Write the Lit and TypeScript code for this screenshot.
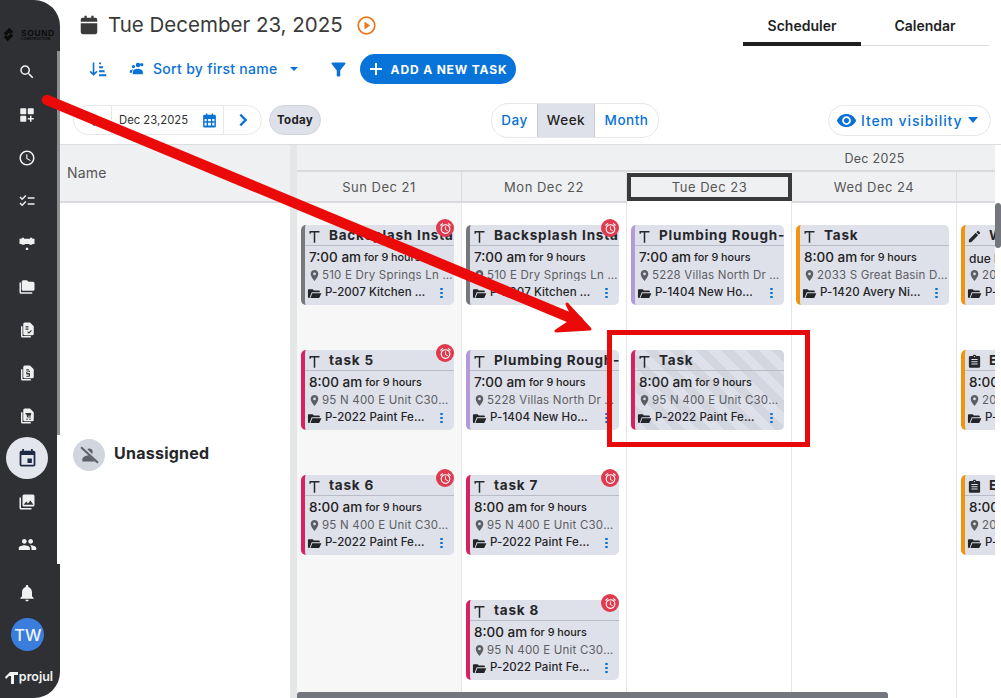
import { LitElement, css, html, nothing, svg } from 'lit';
import { customElement } from 'lit/decorators.js';

type Task = {
  title: string;
  icon?: 'hammer' | 'pencil' | 'clipboard';
  color: string;
  time?: string;
  due?: string;
  address: string;
  project: string;
  alarm?: boolean;
  striped?: boolean;
};

const GREY = '#77787c';
const PINK = '#d8215f';
const PURPLE = '#b49ad8';
const ORANGE = '#f2930f';

const paint = (title: string, extra: Partial<Task> = {}): Task => ({
  title,
  color: PINK,
  time: '8:00 am',
  address: '95 N 400 E Unit C303 Lehi',
  project: 'P-2022 Paint Fence Job',
  alarm: true,
  ...extra,
});

const backsplash: Task = {
  title: 'Backsplash Install',
  color: GREY,
  time: '7:00 am',
  address: '510 E Dry Springs Ln Saratoga',
  project: 'P-2007 Kitchen Remodel',
  alarm: true,
};

const plumbing: Task = {
  title: 'Plumbing Rough-In',
  color: PURPLE,
  time: '7:00 am',
  address: '5228 Villas North Dr Lehi',
  project: 'P-1404 New Home Build',
};

const days: { label: string; weekend?: boolean; today?: boolean; tasks: Task[] }[] = [
  { label: 'Sun Dec 21', weekend: true, tasks: [backsplash, paint('task 5'), paint('task 6')] },
  {
    label: 'Mon Dec 22',
    tasks: [backsplash, { ...plumbing, alarm: false }, paint('task 7'), paint('task 8')],
  },
  {
    label: 'Tue Dec 23',
    today: true,
    tasks: [plumbing, paint('Task', { alarm: false, striped: true })],
  },
  {
    label: 'Wed Dec 24',
    tasks: [
      {
        title: 'Task',
        color: ORANGE,
        time: '8:00 am',
        address: '2033 S Great Basin Drive',
        project: 'P-1420 Avery Nichols',
      },
    ],
  },
  {
    label: 'Thu Dec 25',
    tasks: [
      {
        title: 'Walkthrough',
        icon: 'pencil',
        color: ORANGE,
        due: 'due by',
        address: '2033 S Great Basin Drive',
        project: 'P-1420 Avery Nichols',
      },
      {
        title: 'Estimate',
        icon: 'clipboard',
        color: ORANGE,
        time: '8:00 am',
        address: '2033 S Great Basin Drive',
        project: 'P-1420 Avery Nichols',
      },
      {
        title: 'Estimate',
        icon: 'clipboard',
        color: ORANGE,
        time: '8:00 am',
        address: '2033 S Great Basin Drive',
        project: 'P-1420 Avery Nichols',
      },
    ],
  },
];

const md = (d: string, size = 24, fill = 'currentColor') =>
  html`<svg width=${size} height=${size} viewBox="0 0 24 24" fill=${fill}>${svg`<path d=${d}></path>`}</svg>`;

const I = {
  search:
    'M15.5 14h-.79l-.28-.27A6.47 6.47 0 0 0 16 9.5 6.5 6.5 0 1 0 9.5 16c1.61 0 3.09-.59 4.23-1.57l.27.28v.79l5 4.99L20.49 19l-4.99-5zm-6 0C7.01 14 5 11.99 5 9.5S7.01 5 9.5 5 14 7.01 14 9.5 11.99 14 9.5 14z',
  dash:
    'M4 3h6a1 1 0 0 1 1 1v6a1 1 0 0 1-1 1H4a1 1 0 0 1-1-1V4a1 1 0 0 1 1-1zm10 0h6a1 1 0 0 1 1 1v6a1 1 0 0 1-1 1h-6a1 1 0 0 1-1-1V4a1 1 0 0 1 1-1zM4 13h6a1 1 0 0 1 1 1v6a1 1 0 0 1-1 1H4a1 1 0 0 1-1-1v-6a1 1 0 0 1 1-1zm12 0h2v3h3v2h-3v3h-2v-3h-3v-2h3z',
  clock:
    'M11.99 2C6.47 2 2 6.48 2 12s4.47 10 9.99 10C17.52 22 22 17.52 22 12S17.52 2 11.99 2zM12 20c-4.42 0-8-3.58-8-8s3.58-8 8-8 8 3.58 8 8-3.58 8-8 8zm.5-13H11v6l5.25 3.15.75-1.23-4.5-2.67z',
  checks:
    'M22 7h-9v2h9V7zm0 8h-9v2h9v-2zM5.54 11 2 7.46l1.41-1.41 2.12 2.12 4.24-4.24 1.41 1.41L5.54 11zm0 8L2 15.46l1.41-1.41 2.12 2.12 4.24-4.24 1.41 1.41L5.54 19z',
  sign:
    'M2 5h3V3.500h3V5h8V3.500h3V5h3v7h-3v1h-4v-1h-6v1H5v-1H2zM10.500 17h3v3h-3z',
  folders:
    'M2 6h2v13h15v2H4a2 2 0 0 1-2-2zm5-3h5l2 2h6a2 2 0 0 1 2 2v8a2 2 0 0 1-2 2H7a2 2 0 0 1-2-2V5a2 2 0 0 1 2-2z',
  docCheck:
    'M4 7h2v13h11v2H6a2 2 0 0 1-2-2zm5-5h7l5 5v10a2 2 0 0 1-2 2H9a2 2 0 0 1-2-2V4a2 2 0 0 1 2-2zm1 5v1.500h4V7zm0 3v1.500h4V10zm2.200 4.600 2.300 2.300 4-4-1-1-3 3-1.300-1.300z',
  docDollar:
    'M4 7h2v13h11v2H6a2 2 0 0 1-2-2zm5-5h7l5 5v10a2 2 0 0 1-2 2H9a2 2 0 0 1-2-2V4a2 2 0 0 1 2-2zm2 5v1.500h3.500V10H12a1 1 0 0 0-1 1v2a1 1 0 0 0 1 1h2.500v1.500H11V17h4a1 1 0 0 0 1-1v-3a1 1 0 0 0-1-1h-2.500v-1.500H16V9h-1.500V7z',
  docCart:
    'M4 7h2v13h11v2H6a2 2 0 0 1-2-2zm5-5h7l5 5v10a2 2 0 0 1-2 2H9a2 2 0 0 1-2-2V4a2 2 0 0 1 2-2zm1 6v1.500h1.200l1 4.500h5v-1.400h-3.900l-.2-1H17l.6-3.600zm2 7.200a1 1 0 1 0 0 2 1 1 0 0 0 0-2zm4 0a1 1 0 1 0 0 2 1 1 0 0 0 0-2z',
  calendarEvent:
    'M17 12h-5v5h5v-5zM16 1v2H8V1H6v2H5c-1.110 0-1.990.9-1.990 2L3 19a2 2 0 0 0 2 2h14c1.100 0 2-.9 2-2V5c0-1.100-.9-2-2-2h-1V1h-2zm3 18H5V8h14v11z',
  photos:
    'M2 6h2v14h14v2H4a2 2 0 0 1-2-2zm6-4h12a2 2 0 0 1 2 2v12a2 2 0 0 1-2 2H8a2 2 0 0 1-2-2V4a2 2 0 0 1 2-2zm-.5 13.500h13l-4-5.500-3.200 4-2.300-2.800z',
  people:
    'M16 11c1.660 0 2.990-1.340 2.990-3S17.660 5 16 5c-1.660 0-3 1.340-3 3s1.340 3 3 3zm-8 0c1.660 0 2.990-1.340 2.990-3S9.660 5 8 5C6.340 5 5 6.340 5 8s1.340 3 3 3zm0 2c-2.330 0-7 1.170-7 3.500V19h14v-2.500c0-2.330-4.670-3.500-7-3.500zm8 0c-.29 0-.62.02-.97.05 1.160.84 1.970 1.970 1.970 3.450V19h6v-2.500c0-2.330-4.670-3.500-7-3.500z',
  bell:
    'M12 22c1.100 0 2-.9 2-2h-4c0 1.100.89 2 2 2zm6-6v-5c0-3.070-1.640-5.640-4.500-6.320V4c0-.83-.67-1.500-1.500-1.500s-1.500.67-1.500 1.500v.68C7.630 5.360 6 7.920 6 11v5l-2 2v1h16v-1l-2-2z',
  calendarSolid:
    'M7 2h2.500v2h5V2H17v2h2a2 2 0 0 1 2 2v2.500H3V6a2 2 0 0 1 2-2h2zM3 10h18v10a2 2 0 0 1-2 2H5a2 2 0 0 1-2-2z',
  calendarGrid:
    'M7 2h2v2h6V2h2v2h2a2 2 0 0 1 2 2v14a2 2 0 0 1-2 2H5a2 2 0 0 1-2-2V6a2 2 0 0 1 2-2h2zM5 10v3h3v-3zm5 0v3h4v-3zm6 0v3h3v-3zM5 15v4h3v-4zm5 0v4h4v-4zm6 0v4h3v-4z',
  sortAsc:
    'M6 3h2v13.200l2.600-2.600L12 15l-5 5-5-5 1.400-1.400L6 16.200zM14 3h2.500v2.500H14zm0 5h5v2.500h-5zm0 5h7v2.500h-7zm0 5h9v2.500h-9z',
  group:
    'M12 3.500a3 3 0 1 1 0 6 3 3 0 0 1 0-6zM6 6.500a2.200 2.200 0 1 1 0 4.400 2.200 2.200 0 0 1 0-4.400zM11.500 11.500c3 0 7 1.400 7 4v3.500H5v-3.500c0-2.600 3.500-4 6.500-4zM5.500 12.500c-.8 1-1.500 2-1.500 3.200V17H1v-2c0-1.500 2.500-2.500 4.500-2.500zM17 4a2.200 2.200 0 1 1 0 4.400A2.200 2.200 0 0 1 17 4z',
  filter:
    'M4.250 5.610C6.270 8.200 10 13 10 13v6c0 .55.45 1 1 1h2c.55 0 1-.45 1-1v-6s3.720-4.800 5.740-7.390A.998.998 0 0 0 18.950 4H5.040a1 1 0 0 0-.79 1.610z',
  plus: 'M10.500 3h3v7.500H21v3h-7.500V21h-3v-7.500H3v-3h7.500z',
  eye:
    'M12 4.500C7 4.500 2.730 7.610 1 12c1.730 4.390 6 7.500 11 7.500s9.270-3.110 11-7.500c-1.730-4.390-6-7.500-11-7.500zM12 17c-2.760 0-5-2.240-5-5s2.240-5 5-5 5 2.240 5 5-2.240 5-5 5zm0-8c-1.660 0-3 1.340-3 3s1.340 3 3 3 3-1.340 3-3-1.340-3-3-3z',
  pin:
    'M12 2C8.130 2 5 5.130 5 9c0 5.250 7 13 7 13s7-7.750 7-13c0-3.870-3.130-7-7-7zm0 9.500a2.500 2.500 0 0 1 0-5 2.500 2.500 0 0 1 0 5z',
  folderOpen:
    'M3 5h6l2 2h8a1.500 1.500 0 0 1 1.500 1.500V10H7.500L4 19H3a1.500 1.500 0 0 1-1.500-1.500v-11A1.500 1.500 0 0 1 3 5zm5.500 6.500H23L19.500 19H5.500z',
  hammer:
    'M4 3h16v2.500h-6.800V22h-2.400V5.500H7.500c-1 0-1.500.7-1.500 2H4z',
  pencil:
    'M3 17.250V21h3.750L17.810 9.940l-3.750-3.750L3 17.250zM20.710 7.040a1 1 0 0 0 0-1.410l-2.340-2.340a1 1 0 0 0-1.410 0l-1.830 1.830 3.750 3.750 1.830-1.830z',
  clipboard:
    'M19 3h-4.180C14.400 1.840 13.300 1 12 1s-2.400.84-2.820 2H5a2 2 0 0 0-2 2v15a2 2 0 0 0 2 2h14a2 2 0 0 0 2-2V5a2 2 0 0 0-2-2zM12 3a1 1 0 1 1 0 2 1 1 0 0 1 0-2zM7 8h10v1.600H7zm0 3.500h10v1.600H7zM7 15h10v1.600H7z',
  alarm:
    'm22 5.720-4.600-3.860-1.290 1.530 4.600 3.860L22 5.720zM7.880 3.390 6.600 1.860 2 5.710l1.290 1.530 4.590-3.850zM12.500 8H11v6l4.750 2.850.75-1.230-4-2.370V8zM12 4a9 9 0 1 0 .01 18.010A9 9 0 0 0 12 4zm0 16c-3.870 0-7-3.130-7-7s3.130-7 7-7 7 3.130 7 7-3.130 7-7 7z',
  noPerson:
    'M12 5a4 4 0 0 1 4 4c0 .8-.2 1.500-.6 2.100L10 5.600C10.600 5.200 11.300 5 12 5zM4.700 19v-2c0-2.700 3.600-4.500 6.800-4.800l7 6.800z',
};

const navItems = [
  I.search,
  I.dash,
  I.clock,
  I.checks,
  I.sign,
  I.folders,
  I.docCheck,
  I.docDollar,
  I.docCart,
];

@customElement('app-root')
export class AppRoot extends LitElement {
  static styles = css`
    :host {
      display: flex;
      position: relative;
      width: 1001px;
      height: 698px;
      overflow: hidden;
      background: #fff;
      font-family: Inter, 'Noto Sans', sans-serif;
      color: #222;
    }

    * {
      box-sizing: border-box;
    }

    svg {
      display: block;
      flex: none;
    }

    /* sidebar */
    .sidebar {
      position: relative;
      flex: none;
      width: 60px;
      height: 698px;
      background: #2e3034;
      border-radius: 0 26px 26px 0;
      color: #f0f0f0;
      display: flex;
      flex-direction: column;
      align-items: center;
      padding-right: 6px;
    }

    .sidebar::before {
      content: '';
      position: absolute;
      left: 57px;
      top: 51px;
      width: 3px;
      height: 384px;
      background: #8d8e90;
    }

    .sidebar::after {
      content: '';
      position: absolute;
      left: 57px;
      top: 435px;
      width: 3px;
      height: 129px;
      background: #fff;
    }

    .brand {
      height: 50px;
      width: 54px;
      margin-left: 6px;
      padding: 27px 0 0 0;
      display: flex;
      align-items: flex-start;
      gap: 7px;
      color: #0b0b0b;
    }

    .brand-words {
      display: flex;
      flex-direction: column;
      font-family: 'Liberation Sans', sans-serif;
      font-weight: 700;
      line-height: 1;
    }

    .brand-words b {
      font-size: 8.500px;
      letter-spacing: 0.6px;
      margin-top: 2px;
    }

    .brand-words i {
      font-size: 3.500px;
      font-style: normal;
      letter-spacing: 0.1px;
      white-space: nowrap;
    }

    .nav {
      display: flex;
      flex-direction: column;
      align-items: center;
    }

    .nav a {
      width: 42px;
      height: 43px;
      display: flex;
      align-items: center;
      justify-content: center;
    }

    .nav .current {
      width: 42px;
      height: 42px;
      margin: 0 0 1px;
      border-radius: 50%;
      background: #e3e6ed;
      color: #1d2b44;
    }

    .side-bottom {
      display: flex;
      flex-direction: column;
      align-items: center;
      margin-top: 17px;
    }

    .avatar {
      width: 33px;
      height: 33px;
      margin: 15px 0 0 2px;
      border-radius: 50%;
      background: #3b7ddd;
      color: #eef3fb;
      font-size: 16.500px;
      font-weight: 500;
      display: flex;
      align-items: center;
      justify-content: center;
    }

    .projul {
      margin-top: 20px;
      margin-left: 4px;
      display: flex;
      align-items: center;
      gap: 1px;
      font-size: 12.500px;
      font-weight: 600;
      line-height: 1;
      color: #f2f2f2;
    }

    /* main */
    .main {
      flex: 1;
      min-width: 0;
      display: flex;
      flex-direction: column;
      height: 698px;
    }

    .row-title {
      height: 46px;
      display: flex;
      align-items: center;
      padding: 4px 0 0 18px;
    }

    .date-title {
      font-size: 20.500px;
      font-weight: 400;
      color: #3a3a3a;
      margin-left: 8px;
      white-space: nowrap;
      line-height: 1;
    }

    .play {
      margin-left: 14px;
      width: 19px;
      height: 19px;
    }

    .tabs {
      align-self: flex-end;
      margin-left: auto;
      margin-right: 12px;
      width: 246px;
      height: 46px;
      display: flex;
      border-bottom: 1px solid #dcdcdf;
    }

    .tab {
      height: 46px;
      width: 120px;
      padding-top: 18px;
      text-align: center;
      font-size: 14px;
      font-weight: 600;
      line-height: 16px;
      color: #1f1f1f;
      border-bottom: 4px solid transparent;
    }

    .tab.active {
      border-bottom-color: #1f1f1f;
      border-radius: 4px 4px 0 0;
    }

    .tab + .tab {
      width: 130px;
    }

    .row-tools {
      height: 30px;
      margin-top: 8px;
      display: flex;
      align-items: center;
      color: #0a72d6;
      padding-left: 28px;
    }

    .sort-gap {
      width: 22px;
    }

    .filter-gap {
      width: 30px;
    }

    .sort-label {
      font-size: 14px;
      font-weight: 500;
      margin: -1px 0 0 6px;
      letter-spacing: 0.3px;
      white-space: nowrap;
    }

    .caret {
      width: 0;
      height: 0;
      border-left: 4px solid transparent;
      border-right: 4px solid transparent;
      border-top: 4px solid currentColor;
    }

    .sort-caret {
      margin-left: 12px;
    }

    .add-btn {
      margin-left: 11px;
      width: 156px;
      height: 30px;
      border-radius: 15px;
      background: #0874da;
      color: #fff;
      display: flex;
      align-items: center;
      padding-left: 8px;
      gap: 7px;
      font-size: 12px;
      font-weight: 700;
      letter-spacing: 0.85px;
      white-space: nowrap;
    }

    .row-date {
      height: 35px;
      margin-top: 19px;
      margin-bottom: 6px;
      display: flex;
      align-items: flex-start;
      padding-left: 13px;
    }

    .pager {
      height: 30px;
      width: 189px;
      margin-top: 2px;
      border: 1px solid #e6e7ea;
      border-radius: 15px;
      display: flex;
      align-items: center;
    }

    .pager-prev {
      width: 38px;
      height: 100%;
      display: flex;
      align-items: center;
      justify-content: center;
      color: #0a72d6;
      border-right: 1px solid #e6e7ea;
    }

    .pager-date {
      width: 112px;
      height: 100%;
      display: flex;
      align-items: center;
      padding-left: 7px;
      font-size: 11.300px;
      color: #333;
      gap: 13px;
      white-space: nowrap;
      border-right: 1px solid #e6e7ea;
    }

    .pager-next {
      flex: 1;
      display: flex;
      justify-content: center;
      color: #0a72d6;
    }

    .today-btn {
      margin: 2px 0 0 7px;
      width: 52px;
      height: 30px;
      border-radius: 15px;
      background: #dfe1ea;
      border: 1px solid #cfd2dc;
      font-size: 11.500px;
      font-weight: 700;
      letter-spacing: 0.3px;
      display: flex;
      align-items: center;
      justify-content: center;
    }

    .views {
      margin-left: 170px;
      height: 35px;
      width: 168px;
      display: flex;
      border: 1px solid #e6e7ea;
      border-radius: 17px;
      overflow: hidden;
      color: #0a72d6;
      font-size: 13.500px;
      font-weight: 500;
      letter-spacing: 0.5px;
    }

    .views span {
      display: flex;
      align-items: center;
      justify-content: center;
      padding-bottom: 1px;
    }

    .views .v-day {
      width: 45px;
    }

    .views .v-week {
      width: 58px;
      background: #dfe1ea;
      color: #1f1f1f;
      border-left: 1px solid #c9ccd6;
      border-right: 1px solid #c9ccd6;
    }

    .views .v-month {
      flex: 1;
    }

    .visibility {
      margin: 2px 0 0 169px;
      width: 163px;
      height: 31px;
      border: 1px solid #e6e7ea;
      border-radius: 16px;
      display: flex;
      align-items: center;
      padding: 0 0 1px 7px;
      gap: 4px;
      color: #0a72d6;
      font-size: 14px;
      font-weight: 500;
      letter-spacing: 0.9px;
      white-space: nowrap;
    }

    .visibility .caret {
      border-left-width: 5.500px;
      border-right-width: 5.500px;
      border-top-width: 6px;
      margin-left: 1px;
    }

    /* scheduler */
    .table {
      flex: 1;
      min-height: 0;
      display: flex;
      border-top: 1px solid #dcdde0;
      position: relative;
    }

    .names {
      flex: none;
      width: 230px;
      display: flex;
      flex-direction: column;
    }

    .names-head {
      height: 58px;
      background: #eff0f2;
      border-bottom: 2px solid #d9dadd;
      padding: 0 0 2px 7px;
      display: flex;
      align-items: center;
      font-size: 14px;
      color: #555;
      letter-spacing: 0.2px;
    }

    .names-body {
      flex: 1;
      display: flex;
      align-items: center;
      padding: 4px 0 0 13px;
      gap: 9px;
    }

    .person {
      width: 32px;
      height: 32px;
      border-radius: 50%;
      background: #d1d5de;
      color: #5d6066;
      display: flex;
      align-items: center;
      justify-content: center;
      position: relative;
      margin-top: 4px;
    }

    .person::after {
      content: '';
      position: absolute;
      left: 5px;
      top: 15px;
      width: 23px;
      height: 2px;
      background: #5d6066;
      transform: rotate(43deg);
      box-shadow: 0 -1.500px 0 #d1d5de;
    }

    .person-name {
      font-size: 16px;
      font-weight: 700;
      letter-spacing: 0.25px;
      color: #26272b;
    }

    .gutter {
      flex: none;
      width: 7px;
      background: #e5e6e8;
    }

    .timeline {
      flex: none;
      width: 698px;
      overflow: hidden;
      display: flex;
      flex-direction: column;
    }

    .month-row {
      flex: none;
      height: 27px;
      background: #eff0f2;
      border-bottom: 2px solid #d9dadd;
      display: flex;
      align-items: center;
      justify-content: center;
      width: 1155px;
      padding-top: 1px;
      font-size: 12.500px;
      color: #555;
      letter-spacing: 0.3px;
    }

    .grid {
      flex: 1;
      display: grid;
      grid-template-columns: repeat(5, 165px);
      width: 825px;
    }

    .day-col {
      display: flex;
      flex-direction: column;
      border-right: 1px solid #e6e6e8;
      min-width: 0;
    }

    .day-col.weekend {
      background: #f7f7f7;
    }

    .day-head {
      flex: none;
      height: 31px;
      margin-right: -1px;
      background: #eff0f2;
      border-bottom: 2px solid #d9dadd;
      border-right: 1px solid #dcdde0;
      display: flex;
      align-items: center;
      justify-content: center;
      font-size: 13px;
      color: #555;
      letter-spacing: 0.5px;
    }

    .day-head.is-today {
      height: 28px;
      margin-top: 1px;
      margin-bottom: 2px;
      border: 4px solid #3a3a3a;
    }

    .cards {
      display: flex;
      flex-direction: column;
      gap: 45px;
      padding: 22px 0 0 4px;
    }

    .card {
      position: relative;
      width: 153px;
      height: 80px;
      background-color: #dfe1ea;
      border-left: 4px solid var(--task);
      border-radius: 5px;
      display: flex;
      flex-direction: column;
      font-size: 12px;
      line-height: 1;
    }

    .card.striped {
      background-image: repeating-linear-gradient(
        45deg,
        #dfe1ea 0 9px,
        #d3d6df 9px 18px
      );
    }

    .card-title {
      height: 21px;
      flex: none;
      border-bottom: 1px solid #b9bcc8;
      display: flex;
      align-items: center;
      overflow: hidden;
      padding: 2px 0 0 2px;
      gap: 7px;
      font-size: 13.500px;
      font-weight: 700;
      letter-spacing: 0.8px;
      color: #26272b;
      white-space: nowrap;
    }

    .card-time {
      height: 20px;
      margin-top: 2px;
      padding-left: 4px;
      display: flex;
      align-items: center;
      gap: 3px;
      font-size: 13.500px;
      font-weight: 500;
      color: #222;
      white-space: nowrap;
      overflow: hidden;
    }

    .card-time small {
      font-size: 10.800px;
      font-weight: 500;
      padding-top: 1px;
    }

    .card-time small.due {
      font-size: 12px;
    }

    .card-line {
      display: flex;
      align-items: center;
      min-width: 0;
    }

    .card-line span {
      overflow: hidden;
      white-space: nowrap;
      text-overflow: ellipsis;
      min-width: 0;
    }

    .addr {
      height: 15px;
      padding: 0 1px 0 3px;
      gap: 1px;
      color: #5c5e63;
      font-size: 11.500px;
      letter-spacing: 0.2px;
    }

    .proj {
      height: 20px;
      color: #232427;
      font-size: 11.500px;
      font-weight: 500;
      letter-spacing: 0.1px;
      padding: 0 11px 0 2px;
      gap: 3px;
    }

    .proj span {
      max-width: 104px;
    }

    .dots {
      margin-left: auto;
      flex: none;
      width: 3px;
      display: flex;
      flex-direction: column;
      gap: 1.500px;
    }

    .dots i {
      width: 2.500px;
      height: 2.500px;
      border-radius: 50%;
      background: #0a72d6;
    }

    .alarm {
      position: absolute;
      top: -6px;
      right: 0;
      width: 18px;
      height: 18px;
      border-radius: 50%;
      background: #e03a4e;
      color: #fff;
      display: flex;
      align-items: center;
      justify-content: center;
    }

    .vbar {
      flex: none;
      width: 6px;
      position: relative;
    }

    /* scrollbars and the red marks drawn over the screenshot */
    .vthumb {
      position: absolute;
      left: 0;
      top: 58px;
      width: 6px;
      height: 45px;
      background: #73767d;
      border-radius: 3px;
    }

    .hthumb {
      position: absolute;
      left: 237px;
      bottom: 0;
      width: 591px;
      height: 6px;
      background: #73767d;
      border-radius: 3px 3px 0 0;
    }

    .marks {
      position: absolute;
      left: 0;
      top: 0;
      pointer-events: none;
    }
  `;

  private renderCard(t: Task) {
    const kind = t.icon ?? 'hammer';
    return html`
      <div class="card ${t.striped ? 'striped' : ''}" style="--task:${t.color}">
        <div class="card-title">${md(I[kind], 15)}<span>${t.title}</span></div>
        <div class="card-time">
          ${t.due
            ? html`<small class="due">${t.due}</small>`
            : html`${t.time} <small>for 9 hours</small>`}
        </div>
        <div class="card-line addr">${md(I.pin, 13)}<span>${t.address}</span></div>
        <div class="card-line proj">
          ${md(I.folderOpen, 15)}<span>${t.project}</span>
          <div class="dots"><i></i><i></i><i></i></div>
        </div>
        ${t.alarm ? html`<div class="alarm">${md(I.alarm, 13)}</div>` : nothing}
      </div>
    `;
  }

  render() {
    return html`
      <aside class="sidebar">
        <div class="brand">
          <svg width="11" height="15" viewBox="0 0 14 17" fill="#0b0b0b">
            <path d="M8 0 1 7l3 3 4-4 2 2 3-3zM6 17l7-7-3-3-4 4-2-2-3 3z" />
          </svg>
          <div class="brand-words"><b>SOUND</b><i>CONSTRUCTION</i></div>
        </div>
        <nav class="nav">
          ${navItems.map((d) => html`<a>${md(d, 18)}</a>`)}
          <a class="current">${md(I.calendarEvent, 21)}</a>
          <a>${md(I.photos, 18)}</a>
          <a>${md(I.people, 19)}</a>
        </nav>
        <div class="side-bottom">
          ${md(I.bell, 20)}
          <div class="avatar">TW</div>
          <div class="projul">
            <svg width="13" height="13" viewBox="0 0 13 13" fill="#f2f2f2">
              <path d="M0 6 5 1h8v3H9v9H6V5H4L1 8z" />
            </svg>
            projul
          </div>
        </div>
      </aside>

      <div class="main">
        <div class="row-title">
          ${md(I.calendarSolid, 22, '#3a3a3a')}
          <div class="date-title">Tue December 23, 2025</div>
          <svg class="play" viewBox="0 0 19 19">
            <circle cx="9.500" cy="9.500" r="8.300" fill="none" stroke="#ee7518" stroke-width="1.700" />
            <path d="M7.500 5.500 13 9.500l-5.500 4z" fill="#ee7518" />
          </svg>
          <div class="tabs">
            <div class="tab active">Scheduler</div>
            <div class="tab">Calendar</div>
          </div>
        </div>

        <div class="row-tools">
          ${md(I.sortAsc, 19)}
          <div class="sort-gap"></div>
          ${md(I.group, 18)}
          <div class="sort-label">Sort by first name</div>
          <div class="caret sort-caret"></div>
          <div class="filter-gap"></div>
          ${md(I.filter, 21)}
          <div class="add-btn">${md(I.plus, 16)} ADD A NEW TASK</div>
        </div>

        <div class="row-date">
          <div class="pager">
            <div class="pager-prev">
              <svg width="16" height="16" viewBox="0 0 24 24" fill="none" stroke="currentColor" stroke-width="3.500">
                <path d="M15 4 7 12l8 8" />
              </svg>
            </div>
            <div class="pager-date">Dec 23,2025 ${md(I.calendarGrid, 17, '#0a72d6')}</div>
            <div class="pager-next">
              <svg width="16" height="16" viewBox="0 0 24 24" fill="none" stroke="currentColor" stroke-width="3.500">
                <path d="m8 4 8 8-8 8" />
              </svg>
            </div>
          </div>
          <div class="today-btn">Today</div>
          <div class="views">
            <span class="v-day">Day</span>
            <span class="v-week">Week</span>
            <span class="v-month">Month</span>
          </div>
          <div class="visibility">
            ${md(I.eye, 21)} Item visibility
            <div class="caret"></div>
          </div>
        </div>

        <div class="table">
          <div class="names">
            <div class="names-head">Name</div>
            <div class="names-body">
              <div class="person">${md(I.noPerson, 22)}</div>
              <div class="person-name">Unassigned</div>
            </div>
          </div>
          <div class="gutter"></div>
          <div class="timeline">
            <div class="month-row"><span>Dec 2025</span></div>
            <div class="grid">
              ${days.map(
                (d) => html`
                  <div class="day-col ${d.weekend ? 'weekend' : ''}">
                    <div class="day-head ${d.today ? 'is-today' : ''}">${d.label}</div>
                    <div class="cards">${d.tasks.map((t) => this.renderCard(t))}</div>
                  </div>
                `
              )}
            </div>
          </div>
          <div class="vbar"><div class="vthumb"></div></div>
          <div class="hthumb"></div>
        </div>
      </div>

      <svg class="marks" width="1001" height="698" viewBox="0 0 1001 698">
        <path d="M47 100 578 321" stroke="#ea0a0a" stroke-width="10.500" stroke-linecap="round" fill="none" />
        <path d="M567 304 590 329 556 331 574 319z" fill="#ea0a0a" stroke="#ea0a0a" stroke-width="3" stroke-linejoin="round" />
        <rect x="609.500" y="332.500" width="198" height="112" fill="none" stroke="#e60a0a" stroke-width="5" />
      </svg>
    `;
  }
}
